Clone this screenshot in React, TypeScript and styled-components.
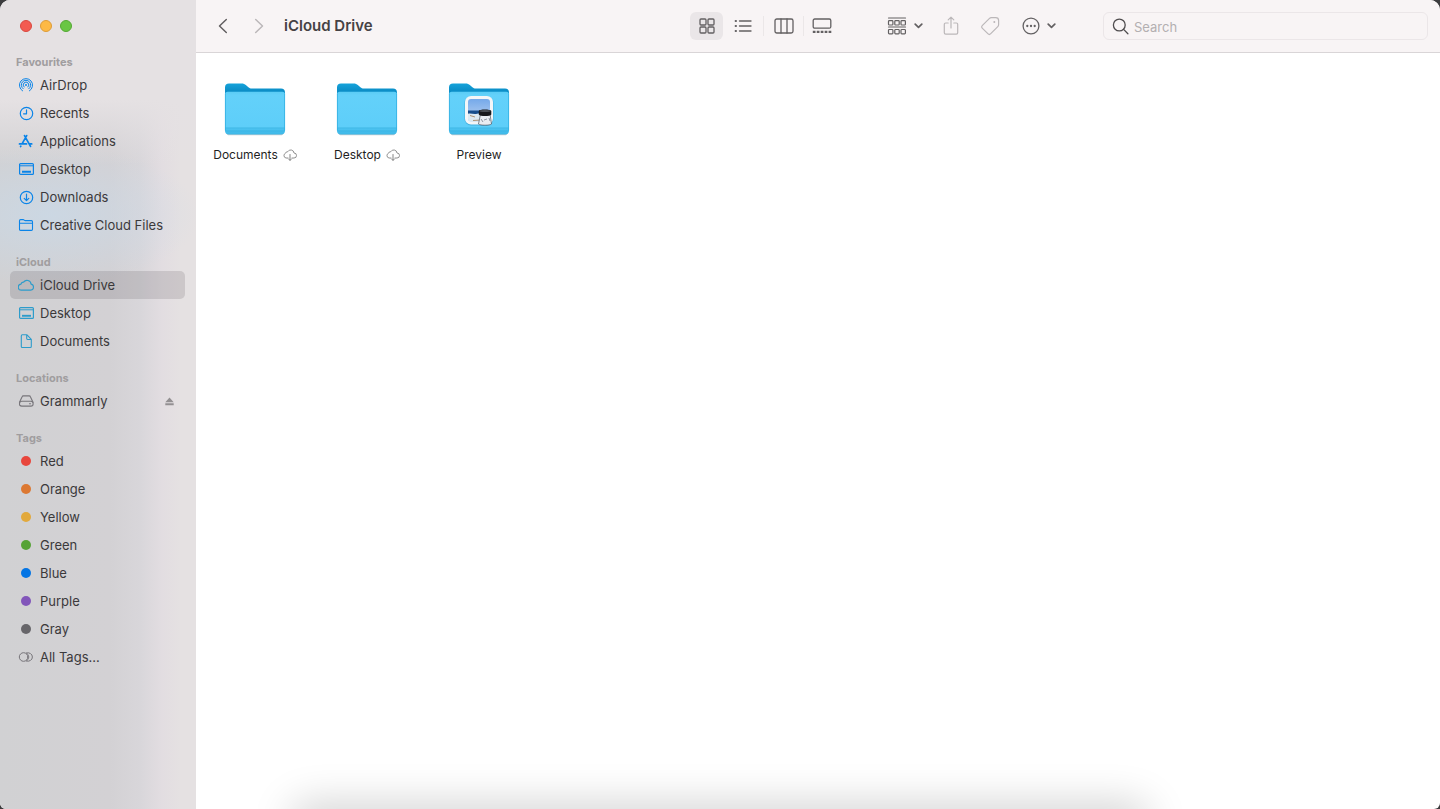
import React from "react";
import styled, { createGlobalStyle } from "styled-components";

const GlobalStyle = createGlobalStyle`
  *, *::before, *::after { box-sizing: border-box; }
  body {
    margin: 0;
    background: #3c3c3e;
    font-family: Inter, "Liberation Sans", sans-serif;
    color: #3b393b;
  }
  button, input { font: inherit; color: inherit; }
  h1, h2, ul { margin: 0; padding: 0; }
  ul { list-style: none; }
`;

const Window = styled.div`
  position: relative;
  display: grid;
  grid-template-columns: 196px minmax(0, 1fr);
  min-height: 100vh;
  border-radius: 10px 10px 6px 6px;
  overflow: hidden;
  background: #fff;
`;

const Sidebar = styled.aside`
  padding: 20px 11px 20px 10px;
  background:
    linear-gradient(to bottom, #e5e1e3 0, #e5e1e3 100px, rgba(229, 225, 227, 0) 165px),
    radial-gradient(150px 70px at 50px 215px, rgba(202, 217, 231, 0.8), rgba(202, 217, 231, 0)),
    linear-gradient(to right, #d1d1d3 0, #d3d1d4 110px, #d8d6da 140px, #e2dde1 162px, #e5e1e2 180px);
`;

const Lights = styled.div`
  display: flex;
  gap: 8px;
  padding-left: 10px;
  margin-bottom: 21px;
`;

const Light = styled.button<{ $fill: string; $edge: string }>`
  width: 12px;
  height: 12px;
  padding: 0;
  border-radius: 50%;
  border: 1px solid ${(p) => p.$edge};
  background: ${(p) => p.$fill};
`;

const Group = styled.section`
  & + & { margin-top: 14px; }
`;

const GroupTitle = styled.h2`
  height: 18px;
  padding-left: 6px;
  font-size: 11px;
  line-height: 18px;
  font-weight: 700;
  color: #a09d9f;
`;

const Row = styled.a<{ $active?: boolean }>`
  display: flex;
  align-items: center;
  gap: 6px;
  height: 28px;
  padding: 0 11px 0 8px;
  border-radius: 5px;
  font-size: 13px;
  line-height: 16px;
  color: #3b393b;
  text-decoration: none;
  white-space: nowrap;
  background: ${(p) => (p.$active ? "rgba(60, 55, 58, 0.15)" : "transparent")};
`;

const RowIcon = styled.span<{ $color: string }>`
  display: grid;
  place-items: center;
  flex: 0 0 16px;
  color: ${(p) => p.$color};
  svg { display: block; }
`;

const RowLabel = styled.span`
  flex: 1;
`;

const Dot = styled.span<{ $color: string }>`
  width: 10px;
  height: 10px;
  border-radius: 50%;
  background: ${(p) => p.$color};
`;

const Main = styled.main`
  display: flex;
  flex-direction: column;
  min-width: 0;
`;

const Toolbar = styled.header`
  display: flex;
  align-items: center;
  height: 53px;
  padding: 0 12px;
  border-bottom: 1px solid #d9d5d7;
  background: #f8f4f5;
`;

const NavArea = styled.div`
  display: flex;
  align-items: center;
  flex: 1;
  min-width: 0;
`;

const IconButton = styled.button<{ $width?: number; $active?: boolean; $faded?: boolean }>`
  display: flex;
  align-items: center;
  justify-content: center;
  gap: 7px;
  width: ${(p) => p.$width ?? 30}px;
  height: 28px;
  padding: 0;
  border: 0;
  border-radius: 6px;
  background: ${(p) => (p.$active ? "#eae6e8" : "transparent")};
  color: ${(p) => (p.$faded ? "#bbb7b9" : "#636062")};
  svg { display: block; flex: none; }
`;

const NavButtons = styled.div`
  display: flex;
  gap: 6px;
`;

const Title = styled.h1`
  margin-left: 10px;
  font-size: 15px;
  line-height: 20px;
  font-weight: 600;
  color: #454244;
  white-space: nowrap;
`;

const Views = styled.div`
  display: flex;
  align-items: center;
  gap: 3px;
  margin-right: 46px;
`;

const Separator = styled.span`
  width: 1px;
  height: 20px;
  background: #ebe7e8;
`;

const Actions = styled.div`
  display: flex;
  align-items: center;
  gap: 9px;
  margin-right: 39px;
`;

const SearchBox = styled.label`
  display: flex;
  align-items: center;
  gap: 5px;
  width: 325px;
  height: 28px;
  padding: 0 8px;
  border: 1px solid #ebe6e8;
  border-radius: 6px;
  color: #4f4c4e;
  svg { flex: none; }
`;

const SearchInput = styled.input`
  flex: 1;
  min-width: 0;
  padding: 2px 0 0;
  border: 0;
  outline: 0;
  background: transparent;
  font-size: 13px;
  line-height: 16px;
  &::placeholder { color: #b3afb1; opacity: 1; }
`;

const Files = styled.ul`
  display: grid;
  grid-template-columns: repeat(auto-fill, 112px);
  padding: 29px 3px;
`;

const File = styled.button`
  display: flex;
  flex-direction: column;
  align-items: center;
  gap: 10px;
  width: 100%;
  padding: 0;
  border: 0;
  background: transparent;
  color: #1f1f1f;
  svg { display: block; }
`;

const FileName = styled.span`
  display: flex;
  align-items: center;
  gap: 5px;
  font-size: 12px;
  line-height: 16px;
  white-space: nowrap;
`;

const DockShade = styled.div`
  position: absolute;
  left: 300px;
  right: 300px;
  bottom: -24px;
  height: 20px;
  border-radius: 20px;
  box-shadow: 0 0 40px 10px rgba(0, 0, 0, 0.18);
  pointer-events: none;
`;

type SvgProps = { w: number; h: number; sw?: number; children: React.ReactNode };
const Svg = ({ w, h, sw = 1.2, children }: SvgProps) => (
  <svg width={w} height={h} viewBox={`0 0 ${w} ${h}`} fill="none" stroke="currentColor" strokeWidth={sw} strokeLinecap="round" strokeLinejoin="round" aria-hidden="true">
    {children}
  </svg>
);

const AirDropIcon = () => (
  <Svg w={16} h={16} sw={1}>
    <path d="M4.6 13.9a6.6 6.6 0 1 1 6.8 0" />
    <path d="M5.2 11.8a4.7 4.7 0 1 1 5.6 0" />
    <path d="M6.1 10a2.8 2.8 0 1 1 3.8 0" />
    <circle cx="8" cy="8" r="1" fill="currentColor" stroke="none" />
  </Svg>
);
const ClockIcon = () => (
  <Svg w={16} h={16}>
    <circle cx="8.5" cy="8.5" r="6.2" />
    <path d="M8.5 4.8v4H5.6" />
  </Svg>
);
const AppsIcon = () => (
  <Svg w={16} h={16} sw={1.7}>
    <path d="M8.700 2.600L4 10.900M6.500 2.600l6 10.800M1.500 10.900h7M11.500 10.900h2.200M2.800 13.200l-.2.300" />
  </Svg>
);
const DesktopIcon = () => (
  <Svg w={16} h={14}>
    <rect x="1.6" y="1.6" width="13.8" height="10.8" rx="1" />
    <path d="M2 3.8h13" strokeWidth="1" />
    <path d="M4 9.800h9" strokeWidth="1.9" strokeLinecap="butt" />
  </Svg>
);
const DownloadIcon = () => (
  <Svg w={16} h={16}>
    <circle cx="8.5" cy="8.5" r="6.2" />
    <path d="M8.5 5.2v6.3M6.2 9.3l2.3 2.3 2.3-2.3" />
  </Svg>
);
const FolderOutline = () => (
  <Svg w={16} h={14} sw={1.1}>
    <path d="M1.500 11.300V2.700c0-.7.400-1.100 1.100-1.100h2.600c.8 0 1.200 1 2 1h6.200c.7 0 1.100.5 1.100 1.100v7.600c0 .7-.4 1.100-1.100 1.100H2.600c-.7 0-1.100-.4-1.100-1.100zM1.700 5.200h12.600" />
  </Svg>
);
const CloudIcon = () => (
  <Svg w={16} h={14}>
    <path d="M3.500 12.200a3 3 0 0 1-.5-6 2.400 2.400 0 0 1 2.600-2 4.100 4.100 0 0 1 7.500 1.900 3.100 3.100 0 0 1-.3 6.100z" />
  </Svg>
);
const DocIcon = () => (
  <Svg w={16} h={16} sw={1.1}>
    <path d="M3.300 3v10.500c0 .6.400 1 1 1h8c.6 0 1-.4 1-1V6.300L9 1.800H4.300c-.6 0-1 .5-1 1.200zM8.700 2v3.600c0 .6.300.9.9.9h3.500" />
  </Svg>
);
const DriveIcon = () => (
  <Svg w={16} h={14} sw={1.1}>
    <path d="M1.500 8.300L4 2.900c.3-.7.700-1 1.400-1h5.700c.7 0 1.200.3 1.400 1L15 8.300" />
    <rect x="1.500" y="7.300" width="13.600" height="4.800" rx="2.200" />
    <path d="M11.500 9.700h1" />
  </Svg>
);
const AllTagsIcon = () => (
  <Svg w={16} h={12} sw={1}>
    <circle cx="5.600" cy="6" r="4.300" />
    <path d="M8.500 2a4.300 4.300 0 1 1 0 8" />
    <path d="M8.500 2a4.600 4.600 0 0 1 0 8" strokeWidth="0.8" />
  </Svg>
);
const EjectIcon = () => (
  <svg width="9" height="9" viewBox="0 0 9 9" fill="#939092" aria-hidden="true">
    <path d="M4.500.5L8.700 5.300H.3zM.3 6.300h8.400v2H.3z" />
  </svg>
);

const Back = () => <Svg w={10} h={16} sw={1.5}><path d="M8.300 1.500L1.500 8l6.800 6.500" /></Svg>;
const Forward = () => <Svg w={10} h={16} sw={1.5}><path d="M1.700 1.500L8.500 8l-6.800 6.500" /></Svg>;
const GridIcon = () => (
  <Svg w={16} h={16} sw={1.3}>
    {[1, 9].map((x) => [1, 9].map((y) => <rect key={`${x}-${y}`} x={x} y={y} width="6" height="6" rx="1" />))}
  </Svg>
);
const ListIcon = () => (
  <Svg w={18} h={14} sw={1.3}>
    {[2, 7, 12].map((y) => (
      <React.Fragment key={y}>
        <path d={`M5.500 ${y}h11.500`} />
        <path d={`M.8 ${y}h2`} strokeWidth="1.900" strokeLinecap="butt" />
      </React.Fragment>
    ))}
  </Svg>
);
const ColumnsIcon = () => (
  <Svg w={20} h={16} sw={1.3}>
    <rect x="1" y="1" width="18" height="14" rx="1.800" />
    <path d="M7 1v14M13 1v14" />
  </Svg>
);
const GalleryIcon = () => (
  <Svg w={20} h={16} sw={1.3}>
    <rect x="1.200" y="1" width="17.600" height="9.200" rx="1.500" />
    <path d="M.8 13.900h18.500" strokeWidth="2.300" strokeDasharray="2.700 1.250" strokeLinecap="butt" />
  </Svg>
);
const GroupIcon = () => (
  <Svg w={20} h={18} sw={1.2}>
    <path d="M1.500 1h17M1.500 10h17" />
    {[1.5, 7.8, 14].map((x) => [3.6, 12.5].map((y) => <rect key={`${x}-${y}`} x={x} y={y} width="4.400" height="4.400" rx="0.800" />))}
  </Svg>
);
const Chevron = () => <Svg w={9} h={6} sw={1.7}><path d="M1.200 1.200l3.300 3.200 3.300-3.200" /></Svg>;
const ShareIcon = () => (
  <Svg w={16} h={20} sw={1.2}>
    <path d="M5.200 7H2.700c-.8 0-1.400.5-1.400 1.400v8.300c0 .9.600 1.400 1.400 1.400h10.600c.9 0 1.400-.5 1.400-1.400V8.400c0-.9-.5-1.400-1.400-1.400h-2.500M8 12V1.200M5.200 3.900L8 1.100l2.800 2.800" />
  </Svg>
);
const TagIcon = () => (
  <Svg w={20} h={20} sw={1.2}>
    <path d="M11.300 1.600h4.400c1.700 0 2.900 1.100 2.900 2.800v4.300c0 .8-.2 1.300-.8 1.900l-7.300 7.300c-.8.8-1.600.8-2.400 0l-5.900-5.800c-.8-.8-.8-1.700 0-2.500l7.300-7.300c.5-.5 1-.7 1.800-.7z" />
    <circle cx="14.300" cy="6" r="1" fill="currentColor" stroke="none" />
  </Svg>
);
const MoreIcon = () => (
  <Svg w={18} h={18} sw={1.3}>
    <circle cx="9" cy="9" r="7.900" />
    {[5.3, 9, 12.7].map((x) => <circle key={x} cx={x} cy="9" r="1.150" fill="currentColor" stroke="none" />)}
  </Svg>
);
const SearchIcon = () => (
  <Svg w={17} h={17} sw={1.3}>
    <circle cx="7.300" cy="7" r="5.900" />
    <path d="M11.600 11.400l4.300 4.300" />
  </Svg>
);
const CloudDownload = () => (
  <svg width="14" height="12" viewBox="0 0 14 12" fill="none" stroke="#858585" strokeLinecap="round" strokeLinejoin="round" role="img" aria-label="In iCloud">
    <path d="M5 9H3A2.500 2.500 0 0 1 2.600 4.200 2 2 0 0 1 4.800 2.700a3.300 3.300 0 0 1 6.200 1.300A2.500 2.500 0 0 1 11 9H9" strokeWidth="0.900" />
    <path d="M7 5.500v5.700M5.500 9.900L7 11.400l1.500-1.500" strokeWidth="1" />
  </svg>
);

const FolderArt = ({ id, preview }: { id: string; preview?: boolean }) => (
  <svg width="62" height="55" viewBox="0 0 62 55" aria-hidden="true">
    <defs>
      <linearGradient id={`back-${id}`} x1="0" y1="0" x2="0" y2="1">
        <stop offset="0" stopColor="#16a3da" />
        <stop offset="0.180" stopColor="#0c8fc8" />
        <stop offset="1" stopColor="#0c8fc8" />
      </linearGradient>
      <linearGradient id={`front-${id}`} x1="0" y1="0" x2="0" y2="1">
        <stop offset="0" stopColor="#5accf5" />
        <stop offset="0.080" stopColor="#63d1fa" />
        <stop offset="0.820" stopColor="#5ecef9" />
        <stop offset="0.860" stopColor="#4cc3f0" />
        <stop offset="1" stopColor="#3db8e8" />
      </linearGradient>
      <linearGradient id={`sky-${id}`} x1="0" y1="0" x2="0" y2="1">
        <stop offset="0" stopColor="#75a9ea" />
        <stop offset="1" stopColor="#bcd3f1" />
      </linearGradient>
    </defs>
    <path d="M2 50h58c-.3 2.500-1.500 3.300-3.500 3.300h-51c-2 0-3.300-.8-3.500-3.300z" fill="#9fa8ad" opacity="0.600" />
    <path d="M1 5.500C1 3 2.400 1.500 5 1.500h12.500c2 0 3.200.5 4.600 1.700l2.300 2c1 .9 2 1.200 3.500 1.200H57c2.600 0 4 1.400 4 4V40H1z" fill={`url(#back-${id})`} />
    <path d="M1 12.500c0-1.800 1-2.700 2.700-2.700h54.600c1.700 0 2.700.9 2.700 2.700v36c0 2.600-1.400 4-4 4H5c-2.600 0-4-1.400-4-4z" fill={`url(#front-${id})`} />
    <path d="M1.500 46h59M1.500 49h59" stroke="#2fa9db" strokeWidth="0.700" opacity="0.600" />
    <path d="M1.400 11.500v37M60.600 11.500v37" stroke="#31addf" strokeWidth="0.800" />
    {preview && (
      <g>
        <rect x="16.500" y="14.500" width="29" height="29" rx="6.500" fill="#2e9dce" opacity="0.600" />
        <rect x="17" y="14" width="28" height="28.500" rx="6" fill="#f4f6f8" />
        <rect x="20" y="17" width="22" height="22.500" rx="3" fill={`url(#sky-${id})`} />
        <path d="M20 28.500h22V33H20z" fill="#174d8b" />
        <path d="M20 31.700c3-.7 5 .6 8 .2s6-.7 14 .3v4.300c0 2-1 3-3 3H23c-2 0-3-1-3-3z" fill="#dce9f2" />
        <path d="M22 33.500l5 1.500M25 38.500l8-.5" stroke="#a98966" strokeWidth="0.900" />
        <path d="M32.500 32l-2 10c1.500 1.600 11.500 1.600 13 0l-1.500-10z" fill="#e9edf2" stroke="#4d5560" strokeWidth="0.700" />
        <path d="M33 37l2 3M41 36l1 3M36 38l3-1" stroke="#78828e" strokeWidth="0.800" />
        <path d="M30.800 29c0-2 12-2 12.500 0v3.600c-1 2-11.500 2-12.500 0z" fill="#17181b" />
        <ellipse cx="37" cy="29" rx="5.500" ry="1" fill="#494d53" />
      </g>
    )}
  </svg>
);

const blue = "#0a84e8";
const teal = "#2d9ccb";
const gray = "#77757a";

type Item = { label: string; icon: React.ReactNode; color: string; active?: boolean; eject?: boolean };
const dot = (c: string) => <Dot $color={c} />;

const groups: { title: string; items: Item[] }[] = [
  {
    title: "Favourites",
    items: [
      { label: "AirDrop", icon: <AirDropIcon />, color: blue },
      { label: "Recents", icon: <ClockIcon />, color: blue },
      { label: "Applications", icon: <AppsIcon />, color: blue },
      { label: "Desktop", icon: <DesktopIcon />, color: blue },
      { label: "Downloads", icon: <DownloadIcon />, color: blue },
      { label: "Creative Cloud Files", icon: <FolderOutline />, color: blue },
    ],
  },
  {
    title: "iCloud",
    items: [
      { label: "iCloud Drive", icon: <CloudIcon />, color: teal, active: true },
      { label: "Desktop", icon: <DesktopIcon />, color: teal },
      { label: "Documents", icon: <DocIcon />, color: teal },
    ],
  },
  { title: "Locations", items: [{ label: "Grammarly", icon: <DriveIcon />, color: gray, eject: true }] },
  {
    title: "Tags",
    items: [
      { label: "Red", icon: dot("#e8463c"), color: gray },
      { label: "Orange", icon: dot("#dc7832"), color: gray },
      { label: "Yellow", icon: dot("#e2a93c"), color: gray },
      { label: "Green", icon: dot("#56a336"), color: gray },
      { label: "Blue", icon: dot("#0475e4"), color: gray },
      { label: "Purple", icon: dot("#8256ba"), color: gray },
      { label: "Gray", icon: dot("#67666a"), color: gray },
      { label: "All Tags...", icon: <AllTagsIcon />, color: gray },
    ],
  },
];

const files = [
  { name: "Documents", cloud: true },
  { name: "Desktop", cloud: true },
  { name: "Preview", preview: true },
];

export default function App() {
  return (
    <>
      <GlobalStyle />
      <Window>
        <Sidebar>
          <Lights>
            <Light $fill="#f35b51" $edge="#d9483f" aria-label="Close" />
            <Light $fill="#fdb945" $edge="#dd9c39" aria-label="Minimise" />
            <Light $fill="#69c644" $edge="#54a834" aria-label="Zoom" />
          </Lights>
          <nav aria-label="Sidebar">
            {groups.map((g) => (
              <Group key={g.title}>
                <GroupTitle>{g.title}</GroupTitle>
                <ul>
                  {g.items.map((it) => (
                    <li key={it.label}>
                      <Row href="#" $active={it.active} aria-current={it.active ? "page" : undefined}>
                        <RowIcon $color={it.color}>{it.icon}</RowIcon>
                        <RowLabel>{it.label}</RowLabel>
                        {it.eject && <EjectIcon />}
                      </Row>
                    </li>
                  ))}
                </ul>
              </Group>
            ))}
          </nav>
        </Sidebar>
        <Main>
          <Toolbar>
            <NavArea>
              <NavButtons>
                <IconButton aria-label="Back"><Back /></IconButton>
                <IconButton aria-label="Forward" $faded><Forward /></IconButton>
              </NavButtons>
              <Title>iCloud Drive</Title>
            </NavArea>
            <Views>
              <IconButton $width={33} $active aria-label="Icons"><GridIcon /></IconButton>
              <IconButton $width={34} aria-label="List"><ListIcon /></IconButton>
              <Separator />
              <IconButton $width={33} aria-label="Columns"><ColumnsIcon /></IconButton>
              <Separator />
              <IconButton aria-label="Gallery"><GalleryIcon /></IconButton>
            </Views>
            <Actions>
              <IconButton $width={44} aria-label="Group"><GroupIcon /><Chevron /></IconButton>
              <IconButton aria-label="Share" $faded><ShareIcon /></IconButton>
              <IconButton aria-label="Tags" $faded><TagIcon /></IconButton>
              <IconButton $width={50} aria-label="More"><MoreIcon /><Chevron /></IconButton>
            </Actions>
            <SearchBox>
              <SearchIcon />
              <SearchInput type="text" placeholder="Search" aria-label="Search" />
            </SearchBox>
          </Toolbar>
          <Files>
            {files.map((f) => (
              <li key={f.name}>
                <File>
                  <FolderArt id={f.name} preview={f.preview} />
                  <FileName>
                    {f.name}
                    {f.cloud && <CloudDownload />}
                  </FileName>
                </File>
              </li>
            ))}
          </Files>
        </Main>
        <DockShade />
      </Window>
    </>
  );
}
